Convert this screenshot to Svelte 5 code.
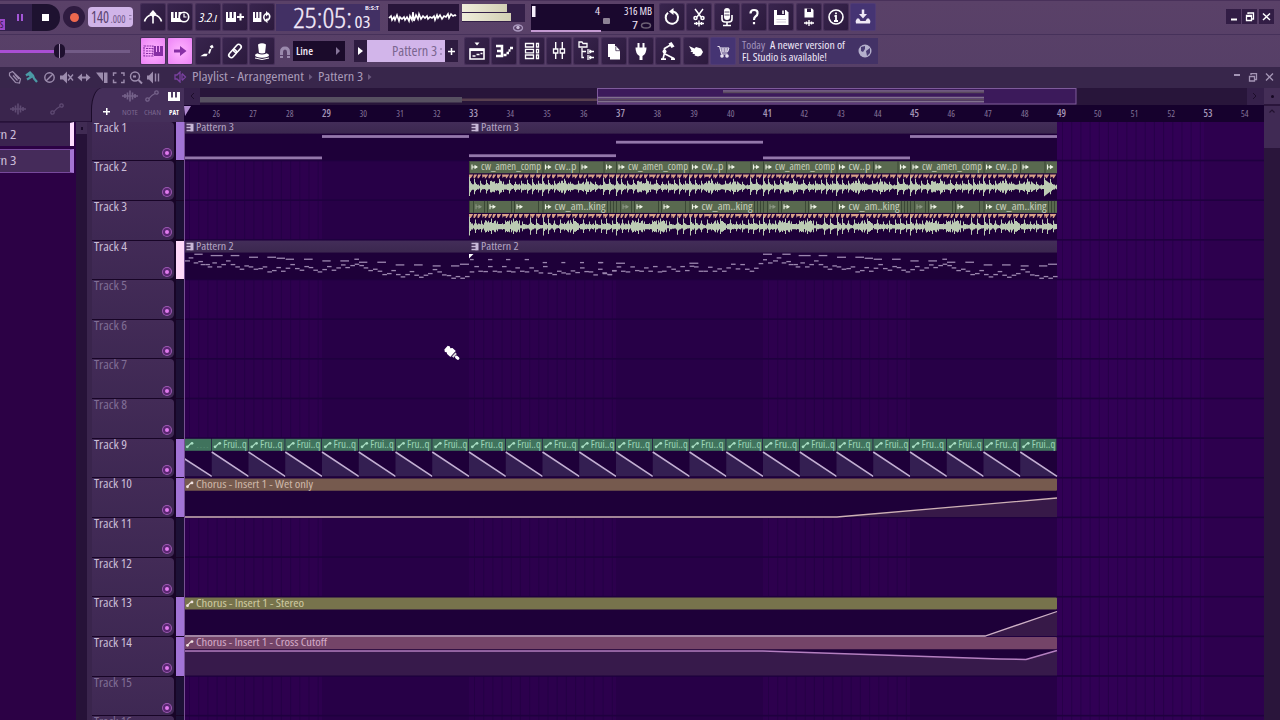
<script>
  const BAR = 36.75;
  const bx = (n) => 469 + (n - 33) * BAR;
  const top = (n) => 121.6 + (n - 1) * 39.65;
  const END = 1057;

  const rulerBars = Array.from({ length: 29 }, (_, i) => 26 + i);
  const tracks = Array.from({ length: 16 }, (_, i) => i + 1);
  const muted = [5, 6, 7, 8, 15, 16];
  const strip = { 1: '#a274d6', 4: '#ffd9f9', 9: '#a274d6', 10: '#a274d6', 13: '#a274d6', 14: '#a274d6' };

  const zones = [
    [184, 322, '#2d004e'], [322, 469, '#270047'], [469, 616, '#2c004d'], [616, 763, '#270047'],
    [763, 910, '#2d004e'], [910, 1057, '#270047'], [1057, 1204, '#310055'], [1204, 1264, '#2d004e']
  ];
  const stripes = [];
  for (const [a, b] of [[184, 322], [469, 616], [763, 910], [1057, 1204]])
    for (let x = a + 5; x < b; x += 9.19) stripes.push(x);

  const longNotes = [[184, 322, 157.7], [322, 469, 136.3], [469, 616, 155.5], [616, 763, 142], [763, 910, 157.7], [910, 1057, 136.3]];

  const up = [[45,60,77],[56,70,68],[73,98,57],[122,158,61],[182,208,61],[237,264,66],[292,318,66],[320,345,69],[347,372,72],[402,428,72],[457,482,77],[511,537,77],[553,567,72],[567,592,81],[622,648,81],[677,703,89],[732,758,89],[788,812,92],[843,868,92],[870,897,87]];
  const low = [[77,83],[91,79],[98,88],[112,88],[119,95],[133,83],[147,95],[160,88],[174,77],[188,88],[202,95],[215,102],[229,92],[242,95],[257,102],[271,100],[284,95],[298,110],[312,106],[325,97],[339,108],[353,99],[367,88],[381,100],[395,105],[409,94],[422,97],[436,105],[449,110],[463,103],[477,94],[491,105],[505,98],[519,89],[532,97],[547,91],[560,87],[574,91],[587,98],[601,106],[615,102],[629,108],[643,118],[657,115],[670,106],[684,118],[698,125],[712,118],[725,109],[739,120],[753,126],[767,120],[780,115],[794,103],[808,110],[822,119],[836,121],[850,129],[863,124],[877,129],[891,124]];
  const notesA = [...up.map(([a, b, y]) => [170 + a / 3, (b - a) / 3, 235 + y / 3]), ...low.map(([x, y]) => [168 + x / 3, 4.6, 235 + y / 3])];
  const upB = [[30,41,418],[84,97,418],[138,151,418],[194,207,418],[248,261,427],[304,316,427],[360,372,427],[414,427,427],[468,495,429],[688,715,429]];
  const lowB = [[35,455],[49,439],[61,453],[76,454],[90,439],[104,453],[118,455],[132,439],[146,453],[159,455],[172,443],[186,453],[200,455],[214,443],[228,452],[242,458],[255,439],[269,459],[283,463],[297,453],[310,458],[324,461],[338,452],[352,457],[366,443],[379,454],[392,455],[406,464],[420,447],[434,460],[449,463],[462,452]];
  const lowC = [[2,322],[13,353],[28,358],[42,346],[56,335],[69,348],[83,350],[97,335],[111,346],[124,348],[138,338],[151,348],[165,334],[179,350],[192,348],[206,335],[220,342],[233,348],[247,334],[261,346],[275,333],[288,335],[302,348],[316,348],[330,336],[344,348],[358,341],[372,348],[385,338],[399,327],[413,341],[427,328],[441,342],[455,348],[468,339],[482,325]];
  const notesB = [...upB.map(([a, b, y]) => [460 + a / 3, (b - a) / 3, 120 + y / 3]), ...lowB.map(([x, y]) => [458 + x / 3, 4.6, 120 + y / 3]), ...lowC.map(([x, y]) => [598 + x / 3, 4.6, 155 + y / 3])];
  const notes = [...notesA, ...notesB, [763, 9, 254], [763, 4, 259.5], [768, 4.6, 262.7], ...notesA.map(([x, w, y]) => [x + 588, w, y]).filter(([x, w]) => x + w <= END + 1)];

  const hits = [0, 5, 11, 17, 24, 30, 40, 46, 52, 58, 63, 69, 73, 79, 85, 95, 101, 109, 117, 126, 134, 140];
  const hitAmp = [10, 8, 6, 7, 5, 8, 7, 5, 6, 7, 8, 6, 10, 7, 6, 8, 5, 6, 8, 5, 9, 8];
  function wave(n, shift) {
    const mid = top(n) + 25.6;
    let d = '';
    for (let x = 469; x < END; x += 1) {
      const p = (x - 469 + shift) % 147;
      let k = 0;
      while (k < hits.length - 1 && hits[k + 1] <= p) k++;
      const dt = p - hits[k];
      const tail = (p > 20 && p < 35) || (p > 88 && p < 100) || (p > 109 && p < 124) ? 4.2 : 2.2;
      const jit = Math.abs(Math.sin(p * 12.9898 + 1) * 43758.5453 % 1);
      const a = dt < 1 ? hitAmp[k] : Math.max(tail * (0.5 + jit), hitAmp[k] * Math.exp(-dt / 2.4) * 0.85);
      d += `M${x + 0.5} ${(mid - a).toFixed(1)}V${(mid + a * 0.85 + 0.6).toFixed(1)}`;
    }
    return d;
  }
  const periods = [469, 616, 763, 910];
  const slices = [0, 5, 9, 13, 20, 24, 28, 33, 41, 45, 50, 55, 61, 67, 73, 78, 83, 88, 97, 103, 110, 115, 119, 127, 134, 140];

  const saws = [[184, 211.8, 458.5], ...Array.from({ length: 23 }, (_, i) => [bx(26 + i), bx(27 + i), 452])];
  const fruits = ['Frui..q', 'Fru..q'];
  const scope = 'M390 17l2-2 1 4 2-3 1 3 2-5 2 6 1-4 2 2 2-2 1 3 2-3 2 4 1-5 2 4 1-8 1 9 2-6 2 4 1-5 2 5 2-3 2 2 2-2 1 3 2-2 2 1 2-2 1 4 2-5 1 3 2-3 2 4 2-3 2 1 2-3 1 4 2-4 2 2 2-1 1 1';
</script>

{#snippet fit(t, w, size, color, weight = 400, h = 14)}
  <svg class="fit" width={w} height={h}><text x="0" y={h / 2 + size * 0.36} textLength={w} lengthAdjust="spacingAndGlyphs" font-size={size} fill={color} font-weight={weight}>{t}</text></svg>
{/snippet}

{#snippet icon(name)}
  <svg class="ico" viewBox="0 0 24 26" width="24" height="26" fill="none" stroke="currentColor" stroke-width="1.6">
    {#if name === 'metro'}
      <path d="M3.500 17.500Q5 12 11 10.500M20.500 17.500Q19 12 13 10.500M12 8V19.500" /><path d="M12 6l3.500 4-3.500 3.500L8.500 10z" fill="currentColor" stroke="none" />
    {:else if name === 'wait'}
      <path d="M3 8h2.500v6H7V8h2v6h1.500V8H14v10H3z" fill="currentColor" stroke="none" /><circle cx="16" cy="13" r="4.700" fill="#2c1a40" /><path d="M16 9.500V13h2.500" stroke-width="1.200" />
    {:else if name === 'count'}
      <text x="3" y="17.500" font-size="13" font-style="italic" fill="currentColor" stroke="none" textLength="18" lengthAdjust="spacingAndGlyphs">3.2.ı</text>
    {:else if name === 'keysplus'}
      <path d="M3 8h2v6h1.500V8h2.500v6h1.500V8H13v10H3z" fill="currentColor" stroke="none" /><path d="M14 13h7M17.500 9.500v7" stroke-width="2" />
    {:else if name === 'loop'}
      <path d="M3 8h2v6h1.200V8h2v6h1.200V8h2v10H3z" fill="currentColor" stroke="none" /><path d="M15.500 17q-3.500-4 0-7h2M18 9q3.500 4 0 7h-2" stroke-width="1.600" /><path d="M16 7l3 2.800-3 2.700zM17.500 13.700l-3 2.800 3 2.700z" fill="currentColor" stroke="none" />
    {:else if name === 'typing'}
      <path d="M3 8h9v10H3zM5 10.500h7M5 13h7M5 15.500h7" stroke-width="1.100" stroke-dasharray="2 .7" /><path d="M13 8h2v6h1V8h2v6h1V8h3v10h-9z" fill="currentColor" stroke="none" />
    {:else if name === 'arrow'}
      <path d="M6 11.500h6V8l6.500 5-6.500 5v-3.500H6z" fill="currentColor" stroke="none" />
    {:else if name === 'slide'}
      <path d="M7 17.500l1.500-1h2l-.5 1z" fill="currentColor" /><path d="M13 15.500l1.500-4.500" stroke-width="1.800" /><path d="M14.500 9.500L17 8" stroke-width="2.800" />
    {:else if name === 'link'}
      <g transform="rotate(-48 12 13)"><rect x="4" y="10.500" width="9" height="5" rx="2.500" /><rect x="11" y="10.500" width="9" height="5" rx="2.500" /></g>
    {:else if name === 'hat'}
      <path d="M8 6.500q4-2.500 8 0l-1 9H9z" fill="currentColor" stroke="none" /><ellipse cx="12" cy="17.300" rx="7" ry="2.500" fill="currentColor" stroke="none" /><path d="M8 15q4 2 8 0" stroke="#35234a" stroke-width="1.200" /><path d="M5 20q7 3 14 0" stroke-width="1" />
    {:else if name === 'playlist'}
      <path d="M5 11h14v10H5z" /><path d="M5 11.800h14" stroke-width="2.500" /><path d="M7.500 18h3m1-1.500h3m1-1h2" /><path d="M9.500 4.500h5L12 7.500z" fill="currentColor" stroke="none" />
    {:else if name === 'roll'}
      <path d="M4 8h6v10H4M5 13h5" stroke-width="2.500" /><path d="M11.500 17h3M14.500 15h2.500M16.500 12.500h2M18 10h3" stroke-width="2.500" />
    {:else if name === 'rack'}
      <path d="M5.500 5.500h8v3.500h-8zM5.500 11.300h8v3.500h-8zM5.500 17h8v3.500h-8zM16.500 5.500h2v3.500h-2zM16.500 11.300h2v3.500h-2zM16.500 17h2v3.500h-2z" stroke-width="1.300" />
    {:else if name === 'mixer'}
      <path d="M8.700 4v17M15.300 4v17" stroke-width="1.400" /><path d="M6.500 11h4.300v4H6.500zM13.200 11h4.300v4h-4.300z" fill="#2c1a40" stroke-width="1.300" />
    {:else if name === 'browser'}
      <path d="M5 4h3l1 1.500h4V9H5zM8 10v9.500h2M8 13.500h4M14 11v5M14 17v5M20 13.500h-5M20 19.500h-5" stroke-width="1.300" /><path d="M15.500 11l3 2.500-3 2.500zM15.500 17l3 2.500-3 2.500z" fill="currentColor" stroke="none" />
    {:else if name === 'doc'}
      <path d="M6 6h7v2H8v11H6z" fill="currentColor" stroke="none" /><path d="M8 8h6l4 4.500v9H8z" fill="currentColor" stroke="none" /><path d="M13.800 8.500v4.200H18" stroke="#2c1a40" stroke-width=".7" />
    {:else if name === 'plug'}
      <path d="M6.500 9.500h11q0 6.500-4 8.500v4h-3v-4q-4-2-4-8.500z" fill="currentColor" stroke="none" /><path d="M9.500 5v6M14.500 5v6" stroke-width="2" />
    {:else if name === 'touch'}
      <path d="M14.500 7L8.500 10.500V15L7 21M9 16l9 4.500M5 21.200h5M15 21.200h4" stroke-width="1.700" /><path d="M12.500 5.500l3-1.500 3 4.500-3 1.500z" fill="currentColor" stroke="none" /><circle cx="8.500" cy="13.500" r="2" fill="currentColor" stroke="none" />
    {:else if name === 'hand'}
      <path d="M5 8l5.500 2.500 1.500-1.500 5 1.500 2 3.500-2 3.500-3 1-3.500-1 .5-1.200-2.500-.6.500-1.400-2.500-.6 1-1.200z" fill="currentColor" stroke="none" />
    {:else if name === 'cart'}
      <path d="M6.500 8.500h2l2 7.500h6M9 10h9l-1.500 4H10M12 10v4M15 10v4M9.500 12h8" stroke-width="1" /><circle cx="11" cy="18" r="1" /><circle cx="16" cy="18" r="1" />
    {:else if name === 'undo'}
      <path d="M8 8.800A6.200 6.200 0 1 0 13 7.500" stroke-width="2" /><path d="M13.500 4v7L9 7.500z" fill="currentColor" stroke="none" />
    {:else if name === 'cut'}
      <path d="M8 5l6 8M16 5l-6 8" stroke-width="1.500" /><circle cx="8.500" cy="14" r="1.500" /><circle cx="15.500" cy="14" r="1.500" /><path d="M7 19.500h10M9.500 18v3M12 16.500v6M14.500 18v3" stroke-width="1.400" />
    {:else if name === 'mic'}
      <rect x="9" y="4" width="6" height="12" rx="3" fill="currentColor" stroke="none" /><path d="M7 11v4q0 3 3 3h4q3 0 3-3v-4M12 18v3M8 21.500h8" /><path d="M9.500 8h5M9.500 11h5" stroke="#2c1a40" stroke-width=".8" />
    {:else if name === 'help'}
      <path d="M8.500 9.500q0-3.500 3.500-3.500 4 0 3.500 3.500 0 1.800-2 3-1.500 1-1.500 3.500M12 18v2.300" stroke-width="2.200" />
    {:else if name === 'save'}
      <path d="M5 6h12l2.500 2.500V21H5z" fill="currentColor" stroke="none" /><path d="M8 6v5h8V6" fill="#2c1a40" stroke="none" /><path d="M14 6.500v3.500" /><path d="M7.500 15.500h9.500M7.500 18h9.500" stroke="#c6bccf" stroke-width=".8" />
    {:else if name === 'savenew'}
      <path d="M7.500 4.500H15l1.500 1.500v7.500h-9z" fill="currentColor" stroke="none" /><path d="M10 4.500V8h4V4.500" fill="#2c1a40" stroke="none" /><path d="M7 19h10M9.500 17.500v3M12 16v6M14.500 17.500v3" stroke-width="1.400" />
    {:else if name === 'info'}
      <circle cx="12" cy="13" r="7" /><path d="M10.500 12H12v5M10 17h4M12 8.500v1.800" stroke-width="1.800" />
    {:else if name === 'export'}
      <path d="M12 5.500v6" stroke-width="2.500" /><path d="M8 10h8L12 14.500z" fill="currentColor" stroke="none" /><path d="M8 14.500H6q-2 2-1 5h14q1-3-1-5h-2l-1.500 2.500h-5z" fill="currentColor" stroke="none" />
    {/if}
  </svg>
{/snippet}

{#snippet waveIcon()}
  <svg width="18" height="14" fill="none" stroke="currentColor" stroke-width="1.600"><path d="M1 7h16M4 5v4M6.500 3.500v7M9 1.500v11M11.500 3.500v7M14 5v4" /></svg>
{/snippet}
{#snippet curveIcon()}
  <svg width="14" height="14" fill="none" stroke="currentColor" stroke-width="1.300"><circle cx="2.500" cy="10.500" r="1.700" /><circle cx="11.500" cy="3.500" r="1.700" /><path d="M4 9.500Q6 6.500 10 4.500" /></svg>
{/snippet}

<div class="app">
  <header class="bars">
    <div class="row">
      <div class="transport">
        <span class="song">S</span><span class="pause"><i></i><i></i></span><span class="stop"><i></i></span>
      </div>
      <span class="rec"><i></i></span>
      <div class="tempo"><svg width="41" height="20"><text x="0" y="15.800" font-size="15.500" fill="#5a4470" textLength="18" lengthAdjust="spacingAndGlyphs">140</text><text x="19.500" y="15.800" font-size="10.500" fill="#71598a" textLength="15" lengthAdjust="spacingAndGlyphs">.000</text><path d="M38 8.500h2.500M38 12h2.500" stroke="#8f79a6" /></svg></div>
      <div class="group g1">
        {#each ['metro', 'wait', 'count', 'keysplus', 'loop'] as n}<span class="btn">{@render icon(n)}</span>{/each}
      </div>
      <div class="clock">
        <svg width="104" height="27"><g fill="#f3eafa"><text x="17" y="24" font-size="27.500" font-weight="300" stroke="#f3eafa" stroke-width=".3" textLength="59" lengthAdjust="spacingAndGlyphs">25:05:</text><text x="78.500" y="24" font-size="16.500" textLength="16" lengthAdjust="spacingAndGlyphs">03</text><text x="89" y="5.500" font-size="5" font-weight="700" textLength="14" lengthAdjust="spacingAndGlyphs">B:S:T</text></g></svg>
      </div>
      <div class="scope"><svg width="71" height="27" viewBox="389 3 71 27"><path d={scope} fill="none" stroke="#fff" stroke-width="1.600" /></svg></div>
      <div class="meters"><div class="mbox"><i style:width="45px"></i><i style:width="49px"></i></div>
        <svg width="12" height="8"><ellipse cx="6" cy="4" rx="4.500" ry="3" fill="none" stroke="#a996bd" stroke-width="1.300" /><circle cx="6" cy="3.500" r="1.700" fill="#c7b9d6" /></svg></div>
      <div class="cpu">
        <svg width="123" height="27"><rect x="1" y="2" width="3.500" height="11" fill="#f6eefb" /><rect x="0" y="26" width="70" height="2" fill="#c49ad2" /><g fill="#efe4f6" font-weight="500"><text x="64" y="11" font-size="10.500" textLength="5" lengthAdjust="spacingAndGlyphs">4</text><text x="93" y="11" font-size="10.500" textLength="28" lengthAdjust="spacingAndGlyphs">316 MB</text><text x="101" y="25" font-size="11.500" textLength="6" lengthAdjust="spacingAndGlyphs">7</text></g><rect x="72" y="14" width="7" height="6" rx="1" fill="#8d8295" /><ellipse cx="115" cy="21.500" rx="4.500" ry="2.500" fill="none" stroke="#6b5f73" stroke-width="1.500" /></svg>
      </div>
      <div class="group g2">
        {#each ['undo', 'cut', 'mic', 'help', 'save', 'savenew', 'info'] as n}<span class="btn">{@render icon(n)}</span>{/each}<span class="btn blue">{@render icon('export')}</span>
      </div>
      <div class="win">
        <span><svg width="15" height="15"><path d="M5 10.500h6" stroke="#fff" stroke-width="2" /></svg></span>
        <span><svg width="15" height="15" fill="none" stroke="#fff" stroke-width="1.300"><path d="M4.500 6.500h5v5h-5zM6 5V4h5.500v6H10" /><path d="M4 7h6" stroke-width="2" /></svg></span>
        <span><svg width="15" height="15"><path d="M4 4.500l7 6.500M11 4.500L4 11" stroke="#fff" stroke-width="1.500" /></svg></span>
      </div>
    </div>

    <div class="row second">
      <div class="slider"><i class="done"></i><i class="knob"></i><i class="rest"></i></div>
      <div class="group g3">
        <span class="btn lit">{@render icon('typing')}</span><span class="btn lit">{@render icon('arrow')}</span>
        {#each ['slide', 'link', 'hat'] as n}<span class="btn">{@render icon(n)}</span>{/each}
      </div>
      <svg class="magnet" width="12" height="13" fill="none" stroke="#9b8aad" stroke-width="3"><path d="M2.500 12V6q0-4 3.500-4t3.500 4v6" /><path d="M1 9.500h3.200M8 9.500h3.200" stroke="#5a406c" stroke-width="1" /></svg>
      <div class="snap">{@render fit('Line', 17, 11.5, '#f1e8f7', 600, 16)}<svg width="5" height="8"><path d="M0 0l4 4-4 4z" fill="#87769a" /></svg></div>
      <div class="pattern"><span class="pb"><svg width="5" height="8"><path d="M0 0l5 4-5 4z" fill="#fff" /></svg></span><span class="pname">{@render fit('Pattern 3', 45, 14, '#7b6690', 400, 18)}<svg width="2" height="10"><path d="M0 3h2M0 8h2" stroke="#9c84b3" stroke-width="1.500" /></svg></span><span class="pb"><svg width="7" height="7"><path d="M3.500 0v7M0 3.500h7" stroke="#fff" stroke-width="1.500" /></svg></span></div>
      <div class="group g4">
        {#each ['playlist', 'roll', 'rack', 'mixer', 'browser', 'doc', 'plug', 'touch', 'hand'] as n}<span class="btn">{@render icon(n)}</span>{/each}<span class="btn blue">{@render icon('cart')}</span>
      </div>
      <div class="news">
        <div class="lines"><div>{@render fit('Today', 23, 10.5, '#a292bd', 400, 12)}{@render fit('A newer version of', 75, 10.5, '#efe6f7', 500, 12)}</div><div>{@render fit('FL Studio is available!', 85, 10.5, '#efe6f7', 500, 12)}</div></div>
        <svg width="14" height="14"><circle cx="7" cy="7" r="6.500" fill="#b5b0cc" /><path d="M3 3l4-1v3L5 8 3 7zM8 7l4-3v5l-3 3z" fill="#4b3c74" /></svg>
      </div>
    </div>
  </header>

  <div class="titlebar">
    <svg class="tools" width="152" height="16" viewBox="8 69.500 152 16" fill="none" stroke="#9c8cad" stroke-width="1.400">
      <path d="M9.500 73.500l3-1.500 8 7.500-1 4-4-.5-6-7zM13 76l4.500 5M14.500 74.500l4.500 5" stroke-width="1.200" />
      <g stroke="#4b9aa5"><path d="M26 76l4-3 3 3 1 3 3 3.500M27 80l5-3M28 74l4 4" stroke-width="2.300" /></g>
      <circle cx="49.500" cy="78" r="4.700" /><path d="M46 81.500l7-7" />
      <path d="M60 76h3l4-4v12l-4-4h-3z" fill="#9c8cad" stroke="none" /><path d="M68 75l5 6M73 75l-5 6" />
      <path d="M80 78h8" stroke-width="2" /><path d="M77.500 78l4.500-4v8zM90.500 78L86 74v8z" fill="#9c8cad" stroke="none" />
      <path d="M96 73h7v9zM104 73h3.500v10.500H104z" fill="#9c8cad" stroke="none" />
      <path d="M116.500 73.500h-3v3M121 73.500h3v3M113.500 80v3h3M124 80v3h-3" />
      <circle cx="135" cy="77" r="4.500" /><path d="M138.500 80.500l3.500 3.500M133 77h3" stroke-width="2" />
      <path d="M147 76h2l4-4v12l-4-4h-2z" fill="#9c8cad" stroke="none" /><path d="M155.500 74v8M158.500 74v8" />
    </svg>
    <svg class="spk" width="13" height="12" fill="none" stroke="#79409f" stroke-width="1.300"><path d="M1 4h2l3-3v10L3 8H1zM8 3v6M8 2.500L11.500 6 8 9.500" /></svg>
    {@render fit('Playlist - Arrangement', 112, 12, '#a99bb9', 500, 16)}
    <svg class="sep" width="4" height="6"><path d="M0 0l3.500 3L0 6z" fill="#6b5a7e" /></svg>
    {@render fit('Pattern 3', 45, 12, '#a99bb9', 500, 16)}
    <svg class="sep" width="4" height="6"><path d="M0 0l3.500 3L0 6z" fill="#6b5a7e" /></svg>
    <svg class="wctl" width="42" height="12" fill="none" stroke="#a495b5" stroke-width="1.300"><path d="M2 4h6" stroke-width="2" /><path d="M17.500 5.500h5v4.500h-5zM19 4V2.700h5.500v5.800H23M34 2.500l7 7M41 2.500l-7 7" /></svg>
  </div>

  <main>
    <aside class="picker">
      <div class="phead">{@render waveIcon()}{@render curveIcon()}</div>
      <div class="pbody">
        <div class="plist">
          {#each ['2', '3'] as n}
            <div class="pitem" class:sel={n === '3'}>
              <svg width="17" height="18"><text x="-30.500" y="13.300" font-size="12" font-weight="500" fill="#cbbdd8" textLength="47" lengthAdjust="spacingAndGlyphs">Pattern {n}</text></svg>
            </div>
          {/each}
        </div>
        <div class="pscroll"><span><i></i></span></div>
      </div>
    </aside>

    <section class="tracks">
      <div class="thead">
        <span class="plus"></span>
        <div class="modes">
          <span>{@render waveIcon()}{@render fit('NOTE', 16, 6.5, '#79658e', 500, 8)}</span>
          <span>{@render curveIcon()}{@render fit('CHAN', 17, 6.5, '#79658e', 500, 8)}</span>
          <span><svg width="14" height="14"><path d="M1 3h12v9H1z" fill="#fff" /><path d="M5 3v5.500M9 3v5.500" stroke="#3e2a54" stroke-width="1.800" /></svg>{@render fit('PAT', 10, 6.5, '#fff', 700, 8)}</span>
        </div>
      </div>
      {#each tracks as n}
        <div class="track">
          <div class="tcell">
            {@render fit('Track ' + n, n > 9 ? 38 : 33, 12, muted.includes(n) ? '#806e95' : '#cabed6', 500, 12)}
            <i class="led"></i>
          </div>
          <i class="strip" style:background={strip[n] ?? '#1d1136'}></i>
        </div>
      {/each}
    </section>

    <section class="timeline">
      <svg width="1080" height="34" viewBox="184 88 1080 34">
        <rect x="184" y="88" width="1080" height="17" fill="#28153a" />
        <rect x="184" y="88" width="16" height="17" fill="#35204a" />
        <rect x="200" y="97" width="262" height="5.500" fill="#575061" />
        <rect x="462" y="98.500" width="135" height="2.500" fill="#59404f" />
        <rect x="597.500" y="88.500" width="478.500" height="15.500" fill="#3c1a5b" stroke="#7e5a9b" />
        <path d="M723 91H984M598 97.700H984M598 101.700H984" stroke="#81708e" stroke-width="1.700" />
        <path d="M723 92.500H984M598 99.700H984" stroke="#5a4a5e" stroke-width="1.500" />
        <rect x="1247" y="88" width="17" height="17" fill="#35204a" /><path d="M1253 93l3 3-3 3M194 93l-3 3 3 3" fill="none" stroke="#1d0d2b" />
        <rect x="184" y="105" width="1080" height="17" fill="#16012d" />
        <path d="M184 106h7l-6 10z" fill="#b18bd0" />
        {#each rulerBars as b}
          {@const major = b % 4 === 1}
          {@const w = major ? 9 : 7.5}
          <text x={bx(b) + 4.500 - w / 2 + (b < 50 ? 0 : -0.500)} y={major ? 117 : 116.800} font-size={major ? 10 : 9} font-weight={major ? 600 : 400} textLength={w} lengthAdjust="spacingAndGlyphs" fill={major ? '#a394b5' : '#85759a'}>{b}</text>
        {/each}
      </svg>
      <svg class="canvas" width="1080" height="599" viewBox="184 122 1080 599">
        <defs>
          <linearGradient id="hp" x2="0" y2="1"><stop stop-color="#432d59" /><stop offset="1" stop-color="#3b274f" /></linearGradient>
        </defs>
        {#each zones as [a, b, c]}<rect x={a} y="121" width={b - a} height="601" fill={c} />{/each}
        {#each stripes as x}<rect x={x} y="121" width="1" height="601" fill="#1f0040" opacity=".55" />{/each}
        {#each tracks as n}<rect x="184" y={top(n) - 1.500} width="1080" height="1.600" fill="#1f003f" />{/each}

        {#each [[1, 'Pattern 3'], [4, 'Pattern 2']] as [n, name]}
          {@const t = top(n)}
          <rect x="184" y={t} width="873" height="38.500" fill="#1e0039" />
          <rect x="184" y={t} width="873" height="12" fill="url(#hp)" />
          {#each [184, 469] as x}
            <path d={`M${x + 2.500} ${t + 3}h5M${x + 2.500} ${t + 6}h5M${x + 2.500} ${t + 9}h5`} stroke="#c9b9d8" stroke-width="1.500" />
            <rect x={x + 6.500} y={t + 2.200} width="3" height="7.600" fill="#c9b9d8" />
            <text x={x + 12} y={t + 9.300} font-size="10.200" font-weight="500" textLength={n === 1 ? 38 : 37.500} lengthAdjust="spacingAndGlyphs" fill="#b5a6c4">{name}</text>
          {/each}
        {/each}
        {#each longNotes as [a, b, y]}<rect x={a} y={y - 1.200} width={b - a} height="2.800" fill="#9477ab" />{/each}
        {#each notes as [x, w, y]}<rect x={Math.max(x, 184)} y={y - 0.400} width={w} height="1.300" fill="#9b86ae" />{/each}
        <path d="M469 254h4.500l-4.500 4.500z" fill="#fff" />

        {#each [2, 3] as n}
          {@const t = top(n)}
          <rect x="469" y={t} width="588" height="38.300" fill="#1e0039" />
          <rect x="469" y={t} width="588" height="12" fill="#59694f" />
          {#each periods as p}
            {#each (n === 2 ? [0, 73.5, 110, 134.500] : [0, 4, 15, 18, 42, 45, 69, 73.5, 138, 141, 144]) as o}
              <rect x={p + o} y={t} width="1" height="12" fill="#3a4735" />
            {/each}
            {#each (n === 2 ? [0, 73.5, 110, 134.500] : [4, 18, 45, 73.5]) as o}
              <path d={`M${p + o + 3} ${t + 3.300}v5M${p + o + 3} ${t + 5.800}h5`} stroke={n === 3 && o === 4 ? '#8c9785' : '#eef3e6'} stroke-width="1.100" />
              <path d={`M${p + o + 5.500} ${t + 3.500}l3.500 2.300-3.500 2.300z`} fill={n === 3 && o === 4 ? '#8c9785' : '#eef3e6'} />
            {/each}
            {#if n === 2}
              <text x={p + 12} y={t + 9} font-size="10.200" font-weight="500" textLength="60" lengthAdjust="spacingAndGlyphs" fill="#c8cfbd">cw_amen_comp</text>
              <text x={p + 85.500} y={t + 9} font-size="10.200" font-weight="500" textLength="22" lengthAdjust="spacingAndGlyphs" fill="#c8cfbd">cw..p</text>
            {:else}
              <text x={p + 85.500} y={t + 9} font-size="10.200" font-weight="500" textLength="51" lengthAdjust="spacingAndGlyphs" fill="#c8cfbd">cw_am..king</text>
            {/if}
            {#each slices as s, i}
              {@const w = (slices[i + 1] ?? 147) - s}
              <path d={`M${p + s} ${t + 13.200}h${w - 0.700}l-2.500 3.800h-1.200l.5-1.600h-${Math.max(w - 5.500, 0)}l-1 1.600z`} fill="#d8a088" />
            {/each}
          {/each}
          <path d={wave(n, n === 2 ? 0 : 73.500)} stroke="#bccbb4" stroke-width="1.050" />
        {/each}
        <path d="M1044 179l9 6.500v4l-9 7z" fill="#bccbb4" />

        <rect x="184" y={top(9)} width="873" height="38.500" fill="#1e0039" />
        {#each saws as [a, b, y], i}
          <path d={`M${a} ${y}L${b} 476.300H${a}z`} fill="#341f52" />
          <path d={`M${a} ${y}L${b} 476.300`} stroke="#c3b0d3" stroke-width="1.500" />
          <rect x={a} y={top(9)} width={b - a - 0.600} height="12" fill="#40735d" />
          <path d={`M${a + 3} ${top(9) + 8.500}l4-4`} stroke="#a9dfc4" stroke-width="1.200" />
          <circle cx={a + 3.300} cy={top(9) + 8} r="1.400" fill="#a9dfc4" /><circle cx={a + 8} cy={top(9) + 4.500} r="1.400" fill="#a9dfc4" />
          {#if i > 0}
            <text x={a + 11.500} y={top(9) + 9.300} font-size="10.200" font-weight="500" textLength={i % 2 ? 23.500 : 22.500} lengthAdjust="spacingAndGlyphs" fill="#9bd3b7">{fruits[(i + 1) % 2]}</text>
          {:else}
            <text x={a + 12} y={top(9) + 9.300} font-size="9.700" textLength="13" lengthAdjust="spacingAndGlyphs" fill="#52876e">....</text>
          {/if}
        {/each}

        {#each [[10, 'Chorus - Insert 1 - Wet only', 117, '#765a4e', '#cfb8a9'], [13, 'Chorus - Insert 1 - Stereo', 108, '#77734c', '#cfcaa2'], [14, 'Chorus - Insert 1 - Cross Cutoff', 131, '#744468', '#d5abc9']] as [n, name, w, c, tc]}
          {@const t = top(n)}
          <rect x="184" y={t} width="873" height="38.500" fill="#1e0039" />
          <rect x="184" y={t} width="873" height="12.200" rx="1" fill={c} />
          <path d={`M187 ${t + 8.500}l4-4`} stroke="#f0e2e0" stroke-width="1.200" />
          <circle cx="187.500" cy={t + 8.300} r="1.400" fill="#f0e2e0" /><circle cx="192" cy={t + 4.500} r="1.400" fill="#f0e2e0" />
          <text x="196" y={t + 9.300} font-size="10.200" font-weight="500" textLength={w} lengthAdjust="spacingAndGlyphs" fill={tc}>{name}</text>
        {/each}
        <path d="M837 517L1057 498V517z" fill="#371948" /><path d="M184 517H837L1057 498" fill="none" stroke="#cdb0b5" stroke-width="1.300" />
        <path d="M985 636L1057 611V636z" fill="#371948" /><path d="M184 636H985L1057 611.500" fill="none" stroke="#cdb0c5" stroke-width="1.300" />
        <path d="M184 651H763L1000 659L1026 659.500L1057 650.500V675.500H184z" fill="#371a4b" /><path d="M184 651H763L1000 659L1026 659.500L1057 650.500" fill="none" stroke="#b47fc0" stroke-width="1.500" />
        <path d="M184.500 121V722" stroke="#765192" />
        <g transform="translate(452 353) rotate(42)"><path d="M-8-2.500l2-1 1.500 1L-3-4h4.500v8H-3l-1.500-1-1.500 1-2-1.500z" fill="#fff" /><rect x="2.200" y="-2.500" width="2" height="5" fill="#ddd" /><rect x="4.500" y="-1.500" width="5" height="3" rx="1.500" fill="#fff" /><path d="M1.800-3.500v7" stroke="#4d3d5c" stroke-width=".7" /></g>
      </svg>
    </section>

    <div class="vscroll"><span class="dot"><i></i></span><span class="thumb"><svg width="16" height="10"><path d="M5.500 6.500L8 4l2.500 2.500" fill="none" stroke="#21112f" stroke-width="1.200" /></svg></span></div>
  </main>
</div>

<style>
  :global(body) { margin: 0; background: #2c0145; }
  .app { width: 1280px; height: 720px; overflow: hidden; display: flex; flex-direction: column; font-family: "Open Sans", "Noto Sans", sans-serif; font-stretch: 75%; color: #fff; }
  svg { display: block; flex: none; }
  i { display: block; }
  .fit, .clock svg, .cpu svg { overflow: visible; }
  .bars { height: 67px; background: linear-gradient(#5a4168, #563f67); box-sizing: border-box; border-top: 1px solid #49315a; flex: none; }
  .row { display: flex; align-items: flex-start; height: 33px; box-sizing: border-box; padding-top: 3px; }
  .row.second { border-top: 1px solid #46315a; padding-top: 3px; }
  .transport { display: flex; width: 60px; height: 27px; background: linear-gradient(90deg, #32204a 0 54%, #1e1230 54%); border-radius: 0 13px 13px 0; align-items: center; }
  .song { width: 5px; height: 11px; margin-top: 13px; background: #9b48c8; font-size: 8px; line-height: 11px; color: #2b1140; }
  .pause { display: flex; gap: 2px; margin-left: 12px; }
  .pause i { width: 2px; height: 7px; background: #a456d8; }
  .stop { margin-left: 19px; }
  .stop i { width: 7px; height: 7px; background: #fff; }
  .rec { width: 22px; height: 22px; margin: 2px 0 0 3px; border-radius: 50%; background: #2f1b40; display: grid; place-items: center; }
  .rec i { width: 9px; height: 9px; border-radius: 50%; background: #ee694e; }
  .tempo { width: 45px; height: 20px; margin: 3px 0 0 3px; border-radius: 4px; background: #d0b4e8; box-sizing: border-box; padding-left: 3px; }
  .tempo svg { overflow: visible; }
  .group { display: flex; gap: 3.3px; }
  .g1, .g3 { margin-left: 8px; }
  .btn { width: 24px; height: 26px; background: linear-gradient(135deg, #38244d, #2c1a3d); border-radius: 1px; box-shadow: 0 0 0 1px #462f59; }
  .btn.lit { background: radial-gradient(#ffb4ff, #ec83f6); color: #872fa5; }
  .btn.blue { background: #453473; color: #eee8f5; box-shadow: 0 0 0 1px #503b75; }
  .clock { width: 104px; height: 27px; margin-left: 2px; background: #423064; }
  .scope { width: 71px; height: 27px; margin-left: 8px; background: #28153a; }
  .meters { width: 63px; margin-left: 3px; display: flex; flex-direction: column; align-items: flex-end; }
  .mbox { width: 63px; height: 18px; background: #331f48; display: flex; flex-direction: column; gap: 1px; }
  .mbox i { height: 8px; background: linear-gradient(90deg, #efedda, #d2cfb4); }
  .meters svg { margin: 2px 1px 0 0; }
  .cpu { width: 123px; height: 27px; margin-left: 6px; background: #1a082e; }
  .g2 { margin-left: 6px; }
  .win { display: flex; gap: 1.500px; margin-left: 350.500px; padding-top: 5px; }
  .win span { width: 15px; height: 15px; background: #321d45; }
  .slider { width: 130px; height: 26px; display: flex; align-items: center; }
  .slider .done { width: 54px; height: 3px; background: #a94fd4; }
  .slider .knob { width: 11px; height: 14px; border-radius: 5px; background: linear-gradient(90deg, #1f102f 45%, #a08eb0 45% 55%, #1f102f 55%); }
  .slider .rest { width: 65px; height: 3px; background: #725b86; }
  .g3 { margin-left: 11px; }
  .magnet { margin: 8px 0 0 5px; }
  .snap { width: 52px; height: 20px; margin: 3px 0 0 2px; background: #1b0b2b; display: flex; align-items: center; justify-content: space-between; box-sizing: border-box; padding: 0 4px 0 3px; }
  .pattern { display: flex; margin: 2px 0 0 9px; height: 22px; }
  .pb { width: 13px; background: #2e1b40; display: grid; place-items: center; }
  .pname { width: 78px; background: #d2b5ea; display: flex; align-items: center; justify-content: flex-end; gap: 3px; box-sizing: border-box; padding-right: 3px; }
  .g4 { margin-left: 7px; }
  .news { width: 139px; height: 26px; margin-left: 4px; background: #433266; display: flex; justify-content: space-between; align-items: center; box-sizing: border-box; padding: 0 6px 0 3px; }
  .lines { display: flex; flex-direction: column; }
  .lines div { display: flex; gap: 5px; }
  .titlebar { height: 21px; background: #38264b; display: flex; align-items: center; flex: none; box-sizing: border-box; padding-bottom: 1px; }
  .tools { margin-left: 8px; }
  .spk { margin: 0 5px 0 14px; }
  .sep { margin: 0 5px; }
  .wctl { margin-left: auto; margin-right: 6px; }
  main { display: flex; flex: 1; min-height: 0; align-items: stretch; }
  .picker { width: 92px; background: #3a254d; flex: none; display: flex; flex-direction: column; }
  .phead { height: 34px; box-sizing: border-box; padding: 14px 0 0 9px; display: flex; gap: 23px; color: #5f4b73; border-bottom: 1px solid #271239; }
  .pbody { flex: 1; display: flex; }
  .plist { width: 76px; background: #2c0145; }
  .pitem { width: 74px; height: 24px; box-sizing: border-box; background: #3b2350; border-right: 4px solid #ffdcff; border-top: 1px solid #2c1540; display: flex; align-items: center; margin-bottom: 3px; }
  .pitem.sel { background: #452b5a; border: 1px solid #77499c; border-left: 0; border-right: 4px solid #a574d3; }
  .pscroll { width: 11px; background: #261238; }
  .pscroll span { display: grid; place-items: center; width: 11px; height: 12px; background: #402b53; }
  .pscroll i { width: 2px; height: 3px; background: #1b0b2b; }
  .tracks { width: 92px; background: #180527; flex: none; display: flex; flex-direction: column; }
  .thead { height: 33.600px; flex: none; background: #3a254d; display: flex; box-sizing: border-box; }
  .plus { width: 27px; border-top-left-radius: 10px 22px; background: linear-gradient(#fff, #fff) 11px 23px / 7px 1.500px no-repeat, linear-gradient(#fff, #fff) 14px 20px / 1.500px 7px no-repeat, #452f5a; box-shadow: -1px 0 0 #1b0b29; }
  .modes { display: flex; padding-top: 1px; background: #452f5a; width: 65px; gap: 4px; box-sizing: border-box; padding-left: 2px; }
  .modes span { display: flex; flex-direction: column; align-items: center; justify-content: space-between; width: 18px; color: #75628a; height: 28px; }
  .track { height: 39.650px; flex: none; display: flex; justify-content: space-between; }
  .tcell { width: 82px; height: 38.700px; border-radius: 0 4px 5px 0; background: linear-gradient(#432b57, #3e2853); box-sizing: border-box; padding: 0 3px 4.500px 2px; display: flex; flex-direction: column; justify-content: space-between; }
  .led { width: 4px; height: 4px; border: 2px solid #5a2672; border-radius: 50%; background: #e27cef; box-shadow: 0 0 0 1px #9d58b3; align-self: flex-end; margin-right: .5px; margin-bottom: -1px; }
  .strip { width: 8px; height: 38.600px; }
  .timeline { flex: 1; min-width: 0; overflow: hidden; }
  .vscroll { width: 16px; flex: none; background: #2a153b; }
  .dot { display: grid; place-items: center; height: 16px; background: #442e57; margin-bottom: 2px; }
  .dot i { width: 3px; height: 3px; background: #160723; border-radius: 50%; }
  .thumb { display: block; height: 42px; background: #402a54; }
</style>
